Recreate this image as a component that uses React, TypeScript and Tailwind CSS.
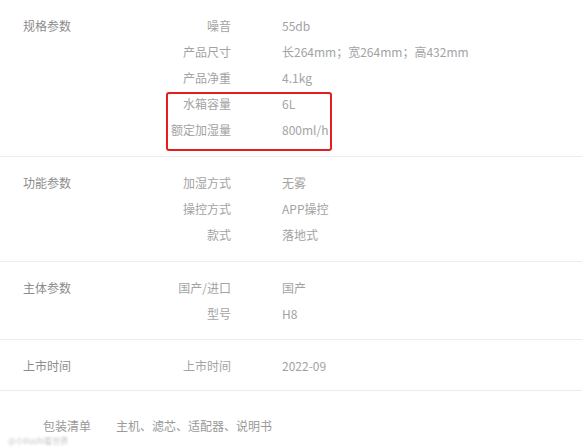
import React from "react";

type Section = { label: string; rows: [string, string][]; pb: string };

const sections: Section[] = [
  {
    label: "规格参数",
    pb: "pb-[13px]",
    rows: [
      ["噪音", "55db"],
      ["产品尺寸", "长264mm；宽264mm；高432mm"],
      ["产品净重", "4.1kg"],
      ["水箱容量", "6L"],
      ["额定加湿量", "800ml/h"],
    ],
  },
  {
    label: "功能参数",
    pb: "pb-[13px]",
    rows: [
      ["加湿方式", "无雾"],
      ["操控方式", "APP操控"],
      ["款式", "落地式"],
    ],
  },
  {
    label: "主体参数",
    pb: "pb-[12px]",
    rows: [
      ["国产/进口", "国产"],
      ["型号", "H8"],
    ],
  },
  {
    label: "上市时间",
    pb: "pb-[11px]",
    rows: [["上市时间", "2022-09"]],
  },
];

export default function App() {
  return (
    <div
      className="relative w-[582px] h-[447px] bg-white overflow-hidden text-[12px]"
      style={{ fontFamily: '"Noto Sans CJK SC", "Liberation Sans", sans-serif' }}
    >
      {sections.map((s, i) => (
        <div key={i} className={`flex border-b border-[#ececec] pt-[13px] ${s.pb}`}>
          <div className="w-[140px] pl-[23px] h-[26px] flex items-center text-[#8c8c8c]">{s.label}</div>
          <div className="flex flex-col">
            {s.rows.map(([k, v], j) => (
              <div key={j} className="flex h-[26px] items-center">
                <div className="w-[91px] text-right text-[#a3a3a3]">{k}</div>
                <div className="ml-[51px] text-[#a3a3a3]">{v}</div>
              </div>
            ))}
          </div>
        </div>
      ))}
      <div className="flex items-center h-[26px] mt-[22px] text-[#999]">
        <div className="pl-[43px] w-[116px]">包装清单</div>
        <div>主机、滤芯、适配器、说明书</div>
      </div>
      <div className="absolute left-[166px] top-[92px] w-[166px] h-[59px] border-2 border-[#e41e1e] rounded-[3px]" />
      <div className="absolute left-[8px] top-[436px] text-[8px] leading-[9px] text-[#c4c4c4] blur-[1px]">@小Rushi看世界</div>
    </div>
  );
}
